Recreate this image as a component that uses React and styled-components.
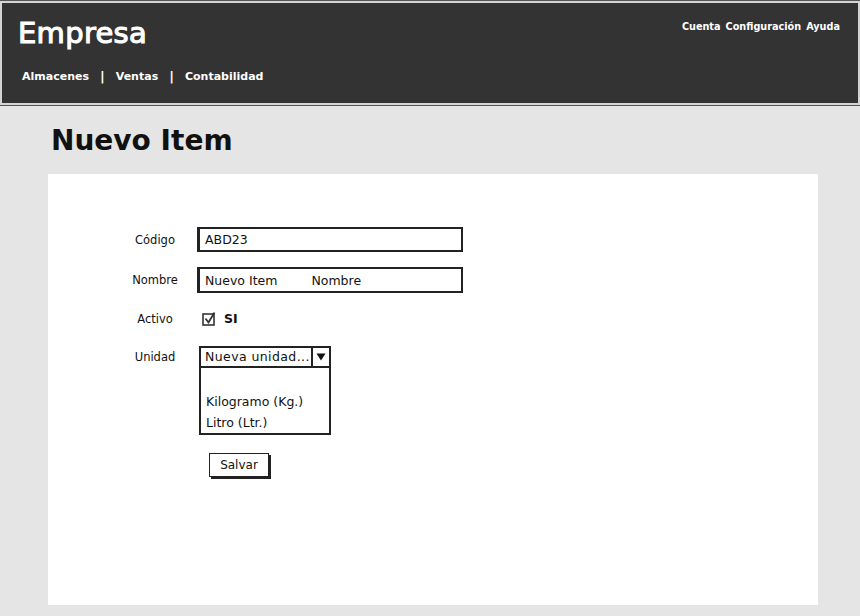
import React from "react";
import styled, { createGlobalStyle } from "styled-components";

const Global = createGlobalStyle`
  html, body {
    margin: 0;
    padding: 0;
    background: #e5e5e5;
  }
  body {
    font-family: "DejaVu Sans", "Noto Sans", sans-serif;
    color: #111;
  }
`;

const Page = styled.div`
  width: 860px;
  height: 616px;
  overflow: hidden;
`;

const Header = styled.header`
  box-sizing: border-box;
  height: 104px;
  margin: 1px 0 0;
  background: #333;
  border: 2px solid #d4d4d4;
  box-shadow: 0 0 0 1px #555;
  color: #fff;
  padding: 10px 18px 0 16px;
  display: flex;
  flex-direction: column;
`;

const TopRow = styled.div`
  display: flex;
  justify-content: space-between;
  align-items: flex-start;
`;

const Brand = styled.div`
  font-size: 29px;
  font-weight: normal;
  -webkit-text-stroke: 1.1px #fff;
  letter-spacing: 0.3px;
  line-height: 40px;
`;

const UserLinks = styled.nav`
  display: flex;
  gap: 5px;
  margin-top: 8px;
  font-size: 9.7px;
  font-weight: bold;
`;

const MainNav = styled.nav`
  display: flex;
  align-items: center;
  gap: 11px;
  margin-top: 16px;
  padding-left: 4px;
  font-size: 11px;
  font-weight: bold;
`;

const Sep = styled.span`
  font-weight: bold;
  font-size: 13px;
`;

const Title = styled.h1`
  margin: 0;
  padding: 16px 0 0 51px;
  height: 53px;
  font-size: 28px;
  font-weight: bold;
  line-height: 40px;
`;

const Panel = styled.main`
  box-sizing: border-box;
  margin-left: 48px;
  width: 770px;
  height: 431px;
  background: #fff;
  padding: 53px 0 0 72px;
  display: flex;
  flex-direction: column;
  gap: 15px;
`;

const Row = styled.div`
  display: flex;
  align-items: ${(p) => (p.$top ? "flex-start" : "center")};
  height: ${(p) => p.$h}px;
  margin-top: ${(p) => p.$mt || 0}px;
`;

const Label = styled.label`
  width: 70px;
  margin-right: 7px;
  text-align: center;
  font-size: 11.5px;
  line-height: 22px;
`;

const TextBox = styled.div`
  box-sizing: border-box;
  width: 266px;
  height: 100%;
  border: 2px solid #222;
  border-left-width: 3px;
  padding: 0 5px;
  display: flex;
  align-items: center;
  gap: 34px;
  font-size: 12.5px;
`;

const Check = styled.div`
  display: flex;
  align-items: center;
  gap: 7px;
  margin-left: 5px;
  font-size: 12.5px;
  font-weight: bold;
`;

const Combo = styled.div`
  margin-left: 2px;
  width: 132px;
`;

const Select = styled.div`
  box-sizing: border-box;
  height: 22px;
  border: 2px solid #222;
  display: flex;
  font-size: 12.5px;
`;

const SelectValue = styled.div`
  flex: 1;
  padding-left: 4px;
  line-height: 18px;
  letter-spacing: 0.4px;
  white-space: nowrap;
  overflow: hidden;
`;

const Arrow = styled.div`
  width: 16px;
  border-left: 2px solid #222;
  display: flex;
  align-items: center;
  justify-content: center;
`;

const List = styled.ul`
  box-sizing: border-box;
  list-style: none;
  margin: 0;
  height: 67px;
  padding: 2px 0 0 5px;
  border: 2px solid #222;
  border-top: none;
  font-size: 12.5px;
  line-height: 21px;
`;

const Option = styled.li`
  height: 21px;
`;

const Actions = styled.div`
  padding-left: 89px;
  margin-top: 3px;
`;

const Button = styled.button`
  box-sizing: border-box;
  width: 60px;
  height: 24px;
  padding: 0;
  background: #fff;
  border: 1.5px solid #222;
  box-shadow: 2px 2px 0 #222;
  font-family: inherit;
  font-size: 12px;
  color: #111;
`;

const CheckIcon = () => (
  <svg width="15" height="15" viewBox="0 0 15 15">
    <rect x="1" y="3" width="11" height="11" fill="none" stroke="#333" strokeWidth="1.6" />
    <path d="M3.5 7.5 L6.5 11.5 L12.5 1.5" fill="none" stroke="#333" strokeWidth="1.8" />
  </svg>
);

const Triangle = () => (
  <svg width="10" height="8" viewBox="0 0 10 8">
    <path d="M0.5 0.5 H9.5 L5 7.5 Z" fill="#111" />
  </svg>
);

export default function App() {
  return (
    <Page>
      <Global />
      <Header>
        <TopRow>
          <Brand>Empresa</Brand>
          <UserLinks>
            <span>Cuenta</span>
            <span>Configuración</span>
            <span>Ayuda</span>
          </UserLinks>
        </TopRow>
        <MainNav>
          <span>Almacenes</span>
          <Sep>|</Sep>
          <span>Ventas</span>
          <Sep>|</Sep>
          <span>Contabilidad</span>
        </MainNav>
      </Header>

      <Title>Nuevo Item</Title>

      <Panel>
        <Row $h={25}>
          <Label>Código</Label>
          <TextBox>ABD23</TextBox>
        </Row>
        <Row $h={26}>
          <Label>Nombre</Label>
          <TextBox>
            <span>Nuevo Item</span>
            <span>Nombre</span>
          </TextBox>
        </Row>
        <Row $h={21}>
          <Label>Activo</Label>
          <Check>
            <CheckIcon />
            <span>SI</span>
          </Check>
        </Row>
        <Row $top $h={89} $mt={2}>
          <Label>Unidad</Label>
          <Combo>
            <Select>
              <SelectValue>Nueva unidad...</SelectValue>
              <Arrow>
                <Triangle />
              </Arrow>
            </Select>
            <List>
              <Option />
              <Option>Kilogramo (Kg.)</Option>
              <Option>Litro (Ltr.)</Option>
            </List>
          </Combo>
        </Row>
        <Actions>
          <Button>Salvar</Button>
        </Actions>
      </Panel>
    </Page>
  );
}
